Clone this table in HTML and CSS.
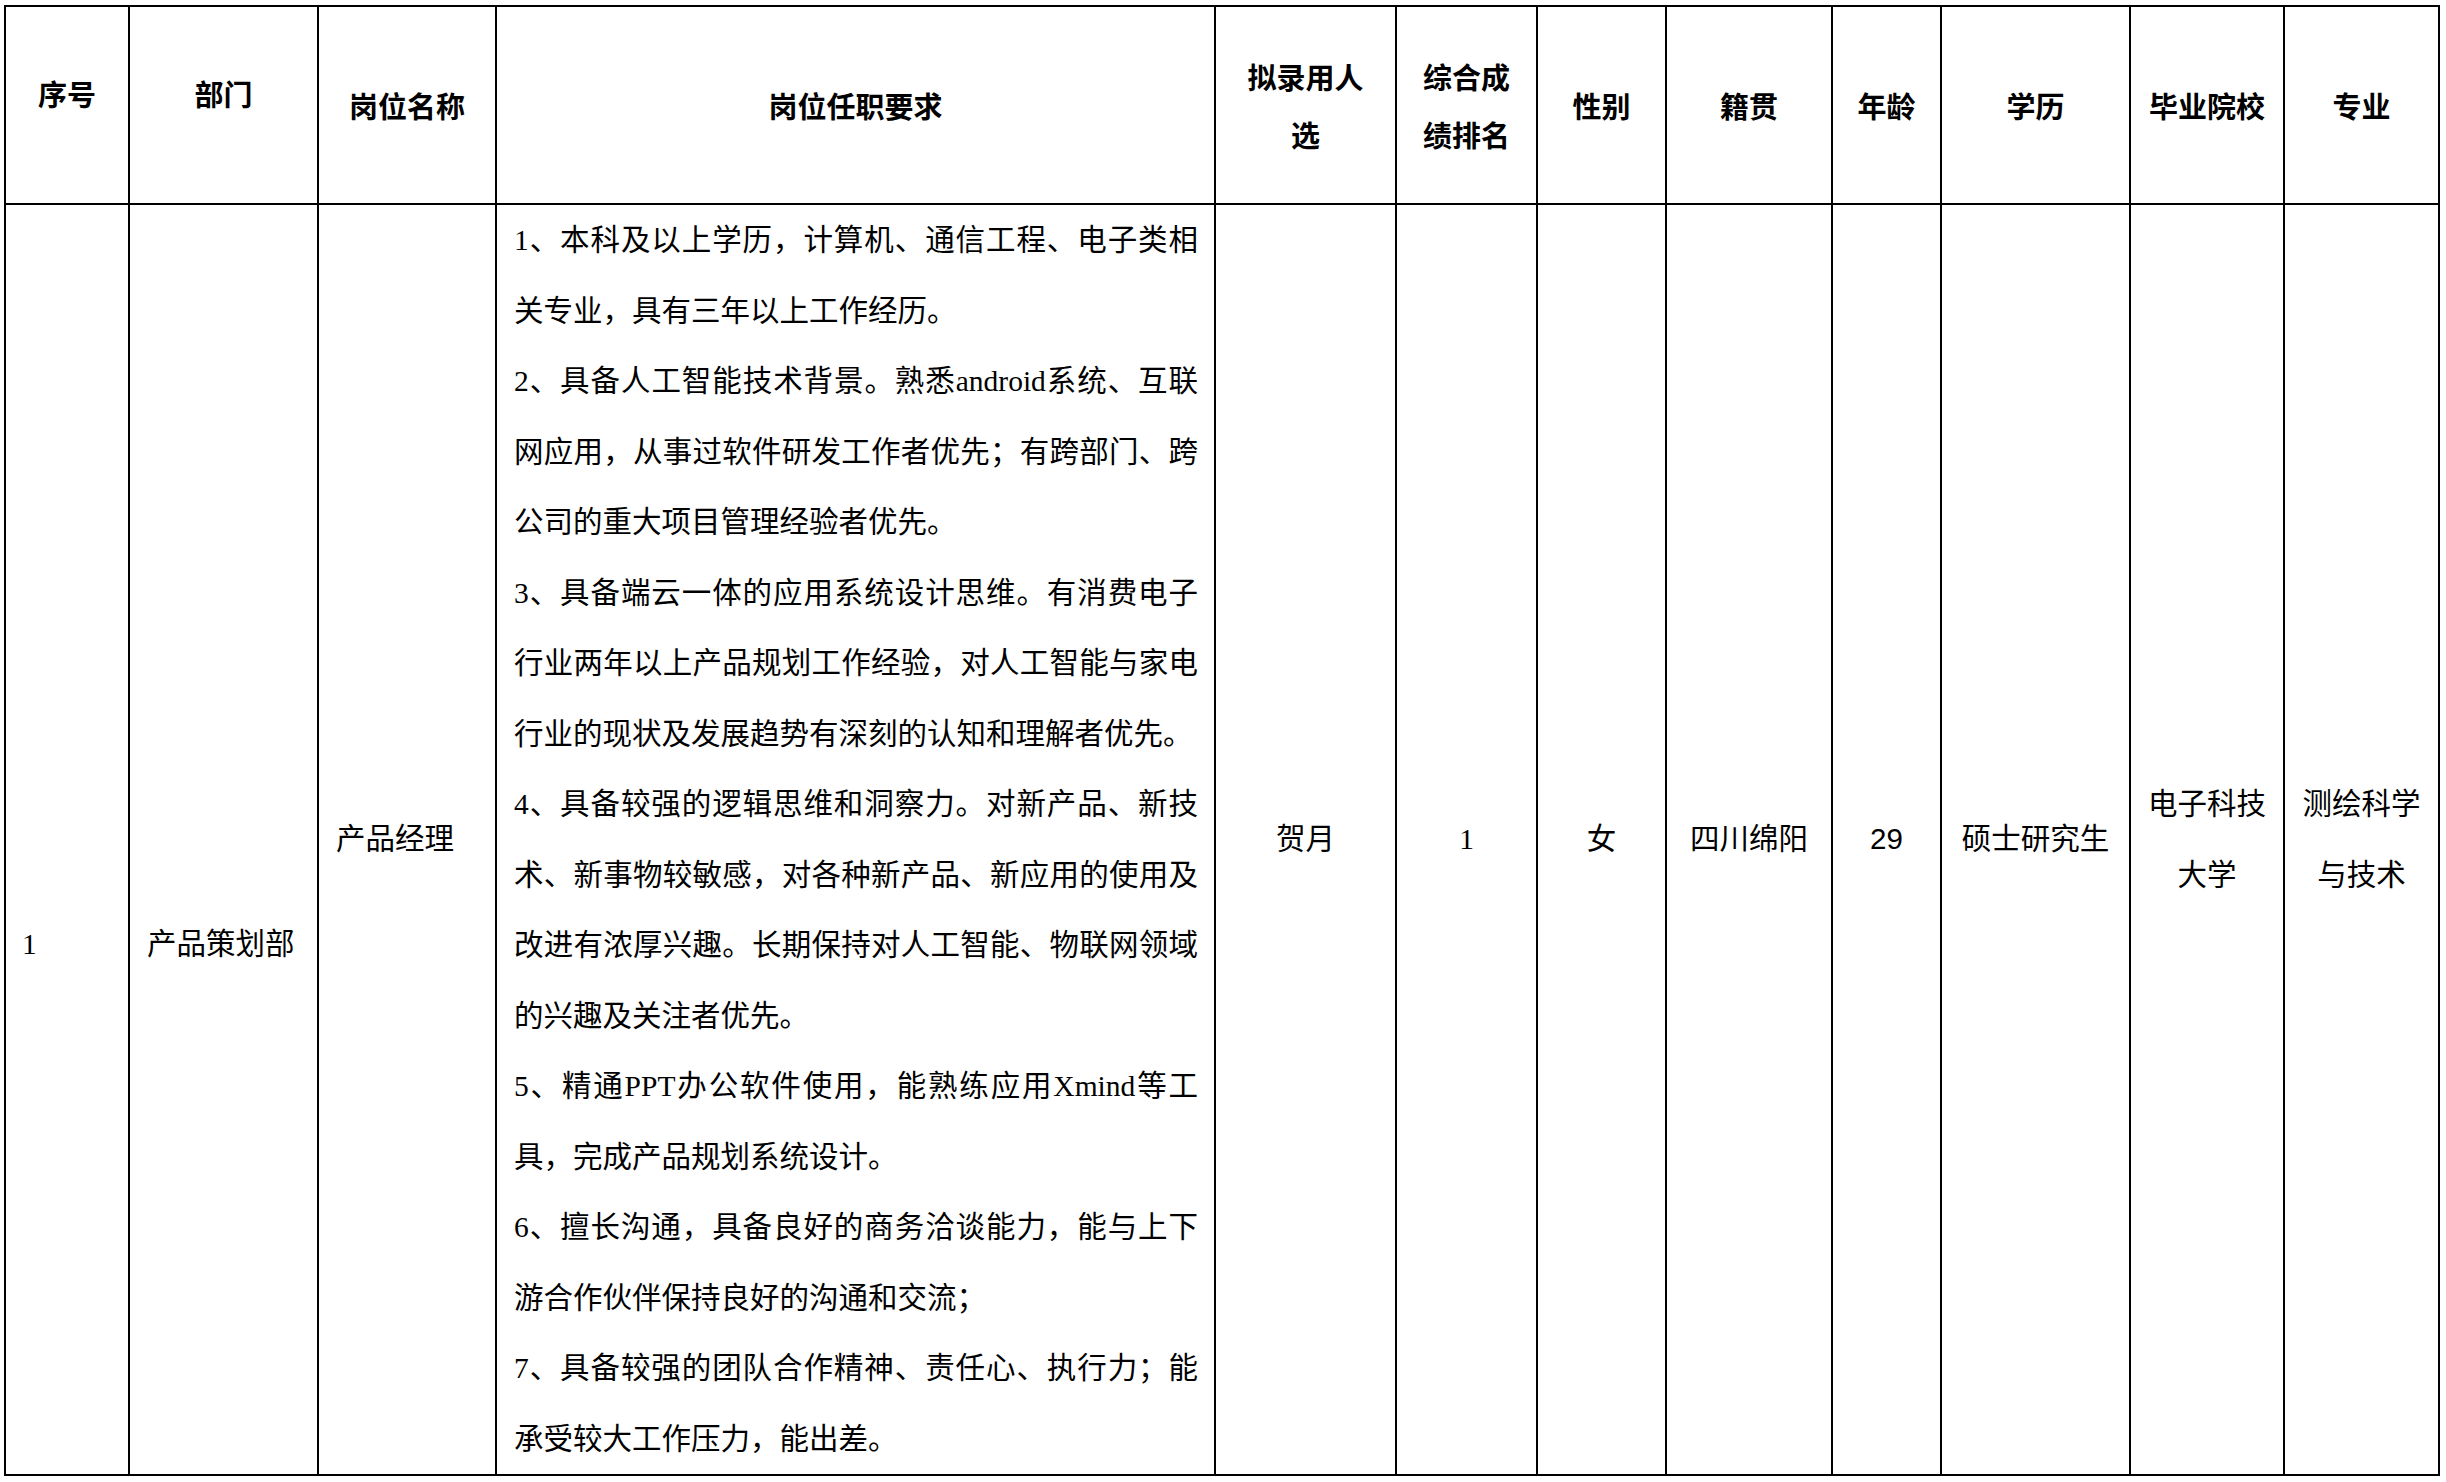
FILE: index.html
```html
<!DOCTYPE html>
<html lang="zh-CN">
<head>
<meta charset="utf-8">
<title>拟录用人员公示</title>
<link rel="stylesheet" href="styles.css">
</head>
<body>
<table class="sheet">
  <thead>
    <tr class="head-row">
      <th class="c1 up">序号</th>
      <th class="c2 up">部门</th>
      <th class="c3">岗位名称</th>
      <th class="c4">岗位任职要求</th>
      <th class="c5 two">拟录用人<br>选</th>
      <th class="c6 two">综合成<br>绩排名</th>
      <th class="c7">性别</th>
      <th class="c8">籍贯</th>
      <th class="c9">年龄</th>
      <th class="c10">学历</th>
      <th class="c11">毕业院校</th>
      <th class="c12">专业</th>
    </tr>
  </thead>
  <tbody>
    <tr class="body-row">
      <td class="left low num">1</td>
      <td class="left low">产品策划部</td>
      <td class="left">产品经理</td>
      <td class="req">
        <span class="ln j">1、本科及以上学历，计算机、通信工程、电子类相</span>
        <span class="ln">关专业，具有三年以上工作经历。</span>
        <span class="ln j">2、具备人工智能技术背景。熟悉android系统、互联</span>
        <span class="ln j">网应用，从事过软件研发工作者优先；有跨部门、跨</span>
        <span class="ln">公司的重大项目管理经验者优先。</span>
        <span class="ln j">3、具备端云一体的应用系统设计思维。有消费电子</span>
        <span class="ln j">行业两年以上产品规划工作经验，对人工智能与家电</span>
        <span class="ln">行业的现状及发展趋势有深刻的认知和理解者优先。</span>
        <span class="ln j">4、具备较强的逻辑思维和洞察力。对新产品、新技</span>
        <span class="ln j">术、新事物较敏感，对各种新产品、新应用的使用及</span>
        <span class="ln j">改进有浓厚兴趣。长期保持对人工智能、物联网领域</span>
        <span class="ln">的兴趣及关注者优先。</span>
        <span class="ln j">5、精通PPT办公软件使用，能熟练应用Xmind等工</span>
        <span class="ln">具，完成产品规划系统设计。</span>
        <span class="ln j">6、擅长沟通，具备良好的商务洽谈能力，能与上下</span>
        <span class="ln">游合作伙伴保持良好的沟通和交流；</span>
        <span class="ln j">7、具备较强的团队合作精神、责任心、执行力；能</span>
        <span class="ln">承受较大工作压力，能出差。</span>
      </td>
      <td class="mid">贺月</td>
      <td class="mid num">1</td>
      <td class="mid">女</td>
      <td class="mid">四川绵阳</td>
      <td class="mid sans">29</td>
      <td class="mid">硕士研究生</td>
      <td class="mid">电子科技<br>大学</td>
      <td class="mid">测绘科学<br>与技术</td>
    </tr>
  </tbody>
</table>
</body>
</html>
```

FILE: styles.css
```css
html, body {
  margin: 0;
  padding: 0;
  background: #ffffff;
}

.sheet {
  margin: 5px 0 0 4px;
  width: 2436px;
  table-layout: fixed;
  border-collapse: separate;
  border-spacing: 0;
  border-top: 2px solid #000;
  border-left: 2px solid #000;
  color: #000;
}

.sheet th,
.sheet td {
  box-sizing: border-box;
  padding: 0;
  border-right: 2px solid #000;
  border-bottom: 2px solid #000;
}

/* column widths (border-box, right border included) */
.c1 { width: 124px; }
.c2 { width: 189px; }
.c3 { width: 178px; }
.c4 { width: 719px; }
.c5 { width: 181px; }
.c6 { width: 141px; }
.c7 { width: 129px; }
.c8 { width: 166px; }
.c9 { width: 109px; }
.c10 { width: 189px; }
.c11 { width: 154px; }
.c12 { width: 155px; }

/* header */
.head-row th {
  height: 198px;
  font-family: "Noto Sans CJK SC", "Liberation Serif", serif;
  font-size: 29px;
  font-weight: 700;
  line-height: 40px;
  text-align: center;
  vertical-align: middle;
}

.head-row th.up {
  padding-bottom: 24px;
}

.head-row th.two {
  line-height: 58px;
}

/* body */
.body-row td {
  font-family: "Liberation Serif", "Noto Sans CJK SC", serif;
  font-size: 29.5px;
  font-weight: 400;
  line-height: 70.5px;
  vertical-align: middle;
}

.body-row td.left {
  text-align: left;
  padding-left: 17px;
}

.body-row td.num.left {
  padding-left: 16px;
}

.body-row td.low {
  padding-top: 210px;
}

.body-row td.mid {
  text-align: center;
}

.body-row td.sans {
  font-family: "Liberation Sans", "Noto Sans CJK SC", sans-serif;
}

.body-row td.req {
  vertical-align: top;
  padding: 0 16px 0 17px;
  text-align: left;
}

.ln {
  display: block;
}

.ln.j {
  text-align: justify;
  text-align-last: justify;
}
```
